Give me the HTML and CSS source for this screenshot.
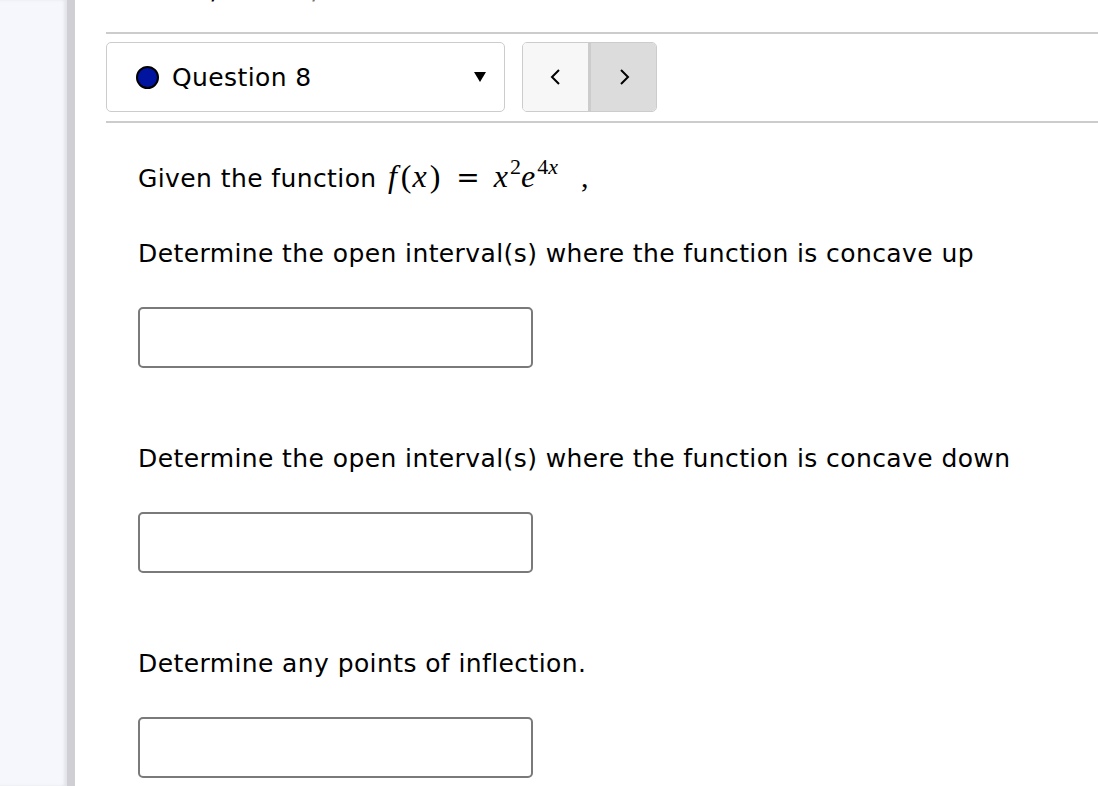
FILE: index.html
```html
<!DOCTYPE html>
<html>
<head>
<meta charset="utf-8">
<link rel="stylesheet" href="styles.css">
</head>
<body>
<div class="page">
  <aside class="side"></aside>
  <main class="main">
    <div class="score"><span class="score-val">Score: 0/15</span><span class="answered">0/15 answered</span></div>
    <div class="rule"></div>
    <div class="qbar">
      <div class="qselect">
        <span class="dot"></span>
        <span class="qlabel">Question 8</span>
        <span class="caret"></span>
      </div>
      <div class="nav">
        <button class="navbtn prev"><svg width="14" height="18" viewBox="0 0 14 18"><path d="M10 2 L3 9 L10 16" fill="none" stroke="#000" stroke-width="2"/></svg></button>
        <button class="navbtn next"><svg width="14" height="18" viewBox="0 0 14 18"><path d="M4 2 L11 9 L4 16" fill="none" stroke="#000" stroke-width="2"/></svg></button>
      </div>
    </div>
    <div class="rule"></div>
    <div class="question">
      <p class="given">Given the function <span class="math"><i class="fn">f</i><span class="paren">(</span><i>x</i><span class="paren">)</span><span class="eq">=</span><i>x</i><sup>2</sup><i>e</i><sup><span class="four">4</span><i>x</i></sup></span><span class="comma">,</span></p>
      <p class="prompt">Determine the open interval(s) where the function is concave up</p>
      <div class="answer"></div>
      <p class="prompt">Determine the open interval(s) where the function is concave down</p>
      <div class="answer"></div>
      <p class="prompt">Determine any points of inflection.</p>
      <div class="answer"></div>
    </div>
  </main>
</div>
</body>
</html>
```
FILE: styles.css
```css
html, body {
  margin: 0;
  padding: 0;
  background: #fff;
  height: 100%;
  overflow: hidden;
}
.page {
  display: flex;
  height: 786px;
  font-family: "DejaVu Sans", sans-serif;
  letter-spacing: 0.4px;
  color: #000;
}
.side {
  width: 67px;
  flex: none;
  background: #f5f7fc;
  border-right: 8px solid #d0d0d4;
  box-shadow: inset -3px 0 3px #e4e4ea;
}
.main {
  flex: 1;
  padding-left: 31px;
}
.score {
  margin-top: -23px;
  height: 55px;
  font-size: 25px;
  line-height: 28px;
}
.score-val { display: inline-block; width: 190px; }
.answered { color: #777; }
.rule {
  height: 2px;
  background: #cccccc;
}
.qbar {
  display: flex;
  gap: 17px;
  padding: 8px 0 9px;
}
.qselect {
  width: 399px;
  height: 70px;
  border: 1px solid #cccccc;
  border-radius: 5px;
  display: flex;
  align-items: center;
  padding: 0 18px 0 29px;
  box-sizing: border-box;
}
.dot {
  width: 23px;
  height: 23px;
  border-radius: 50%;
  background: #0014a0;
  border: 2px solid #000;
  box-sizing: border-box;
}
.qlabel {
  font-size: 25px;
  margin-left: 13px;
  flex: 1;
}
.caret {
  width: 0;
  height: 0;
  border-left: 6px solid transparent;
  border-right: 6px solid transparent;
  border-top: 10px solid #000;
}
.nav {
  display: flex;
  width: 135px;
  height: 70px;
  border: 1px solid #cccccc;
  border-radius: 5px;
  overflow: hidden;
  box-sizing: border-box;
}
.navbtn {
  flex: 1;
  border: none;
  margin: 0;
  padding: 0;
  display: flex;
  align-items: center;
  justify-content: center;
}
.prev { background: #f7f7f7; border-right: 3px solid #cccccc; }
.next { background: #dcdcdc; }
.question {
  padding-left: 32px;
}
.given {
  margin: 0;
  padding-top: 38px;
  height: 36px;
  font-size: 25px;
  line-height: 36px;
}
.math {
  font-family: "Liberation Serif", serif;
  font-size: 32px;
  line-height: 0;
  letter-spacing: 0;
  margin-left: 3px;
}
.math i { padding-right: 2px; }
.math i.fn { padding-right: 3px; }
.paren { padding: 0 1px; }
.eq {
  font-family: "DejaVu Sans", sans-serif;
  font-size: 28px;
  margin: 0 14px 0 15px;
}
sup { font-size: 22px; line-height: 0; vertical-align: 13px; }
.four { font-style: normal; }
.comma {
  font-family: "Liberation Serif", serif;
  font-size: 30px;
  line-height: 0;
  margin-left: 21px;
}
.prompt {
  margin: 0;
  font-size: 25px;
  line-height: 36px;
}
.given + .prompt { margin-top: 39px; }
.answer {
  width: 395px;
  height: 61px;
  border: 2px solid #7a7a7a;
  border-radius: 5px;
  box-sizing: border-box;
  margin-top: 35px;
  margin-bottom: 73px;
}
```
